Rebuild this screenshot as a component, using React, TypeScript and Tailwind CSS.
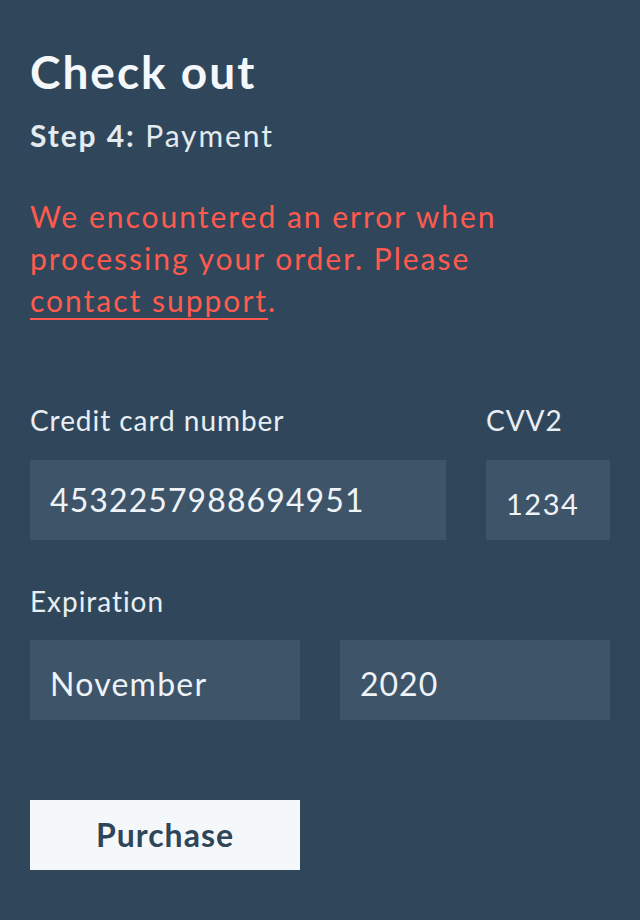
export default function App() {
  return (
    <div className="min-h-[920px] w-[640px] bg-[#30475b] px-[30px] pt-[44px] font-['Lato','Liberation_Sans',sans-serif]">
      <h1 className="text-[46px] font-bold leading-[1.2] tracking-[2px] text-[#f5f8fb]">Check out</h1>
      <p className="mt-[18px] text-[30px] leading-[1.2] tracking-[1.9px] text-[#e3eaf0]">
        <span className="font-bold">Step 4:</span> Payment
      </p>

      <p className="mt-[42px] w-[520px] text-[30px] leading-[42px] tracking-[2px] text-[#ff5a4d]">
        We encountered an error when processing your order. Please{" "}
        <a href="#" className="underline decoration-2 underline-offset-[6px]">
          contact support
        </a>
        .
      </p>

      <form className="mt-[83px]">
        <div className="flex gap-[40px]">
          <div className="flex w-[416px] flex-col gap-[22px]">
            <label className="text-[28px] leading-[1.2] tracking-[0.95px] text-[#e8eef3]">Credit card number</label>
            <input
              className="h-[80px] w-full bg-[#3e5469] px-[20px] text-[32px] tracking-[1.1px] text-[#eef3f7] outline-none"
              defaultValue="4532257988694951"
            />
          </div>
          <div className="flex w-[124px] flex-col gap-[22px]">
            <label className="text-[28px] leading-[1.2] tracking-[0.95px] text-[#e8eef3]">CVV2</label>
            <input
              className="h-[80px] w-full bg-[#3e5469] px-[20px] pt-[8px] text-[29px] tracking-[1.5px] text-[#eef3f7] outline-none"
              defaultValue="1234"
            />
          </div>
        </div>

        <div className="mt-[45px] flex flex-col gap-[22px]">
          <label className="text-[28px] leading-[1.2] tracking-[0.95px] text-[#e8eef3]">Expiration</label>
          <div className="flex gap-[40px]">
            <input
              className="h-[80px] w-[270px] bg-[#3e5469] px-[20px] pt-[6px] text-[32px] tracking-[1.25px] text-[#eef3f7] outline-none"
              defaultValue="November"
            />
            <input
              className="h-[80px] w-[270px] bg-[#3e5469] px-[20px] pt-[6px] text-[32px] tracking-[1px] text-[#eef3f7] outline-none"
              defaultValue="2020"
            />
          </div>
        </div>

        <button
          type="button"
          className="mt-[80px] h-[70px] w-[270px] bg-[#f5f8fb] text-[32px] font-bold tracking-[1px] text-[#2f465a]"
        >
          Purchase
        </button>
      </form>
    </div>
  );
}
